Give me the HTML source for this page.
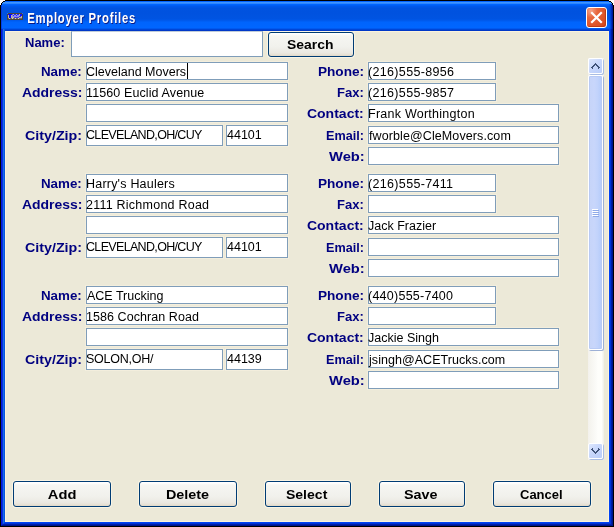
<!DOCTYPE html>
<html><head><meta charset="utf-8">
<style>
*{margin:0;padding:0}
html,body{width:614px;height:527px;overflow:hidden;background:#fff}
body{position:relative;font-family:"Liberation Sans",sans-serif}
#win{position:absolute;left:0;top:0;width:614px;height:527px;background:#000;overflow:hidden}
#title{position:absolute;left:1px;top:1px;width:612px;height:30px;
 background:linear-gradient(180deg,#0062ff 0px,#0062ff 1px,#3d95ff 1px,#3d95ff 2px,#2e86ff 2px,#2e86ff 3px,#0066ff 3px,#0066ff 4px,#005ef5 4px,#005ef5 5px,#0058ea 5px,#0058ea 6px,#0055e5 6px,#0055e5 7px,#0053e0 7px,#0052df 12px,#0054e2 18px,#005cf0 20px,#0064fc 21px,#0066ff 26px,#0066ff 27px,#005af0 27px,#005af0 28px,#0046d6 28px,#0046d6 29px,#0038c8 29px)}
#lf{position:absolute;left:1px;top:31px;width:4px;height:495px;background:linear-gradient(90deg,#0019e0 0,#0019e0 1px,#0831d9 1px,#0831d9 2px,#166aee 2px,#166aee 3px,#0855dd 3px)}
#rf{position:absolute;left:609px;top:31px;width:4px;height:495px;background:linear-gradient(90deg,#0040f8 0,#0040f8 1px,#0030d8 1px,#0030d8 2px,#001ca0 2px,#001ca0 3px,#00138c 3px)}
#bf{position:absolute;left:1px;top:522px;width:612px;height:4px;background:linear-gradient(180deg,#0044f0 0,#0044f0 1px,#0038d8 1px,#0038d8 2px,#0020a8 2px,#0020a8 3px,#00128c 3px)}
#client{position:absolute;left:5px;top:31px;width:602px;height:489px;background:#ece9d8;border:1px solid #fbf3dc}
#close{position:absolute;left:586px;top:7px;width:19px;height:19px;border:1px solid #fff;border-radius:3px;
 background:radial-gradient(ellipse at 20% 15%,#f4a48a 0,#e8683e 30%,#de5428 65%,#cf4418 100%);box-shadow:inset -1px -1px 0 #c03c14}
.t{position:absolute;line-height:16px;white-space:nowrap}
.f{position:absolute;border:1px solid #7f9db9;background:#fff;box-shadow:0 0 0 1px #f3eedd}
.b{position:absolute;border:1px solid #003c74;border-radius:3px;background:linear-gradient(180deg,#fff 0,#fff 1px,#f6f6f2 3px,#f1f1ec 60%,#ebe9e2 85%,#e6e0d3 calc(100% - 1px),#e0d6c4 100%);box-shadow:0 0 0 1px #f9f4e4}
.sbb{position:absolute;width:13px;border:1px solid #fff;border-radius:2px;box-shadow:1px 1px 0 #a9bde3}
.sbb i{position:absolute;display:block;width:1px;height:1px;background:#4d6185}
.cv{position:absolute;display:block;width:1px;height:1px;background:#3f5278}

</style></head><body>
<div id="win">
<div id="title"></div>
<div style="position:absolute;left:1px;top:29px;width:610px;height:496px;border-left:1px solid #0019e0;border-right:1px solid #00138c;border-bottom:1px solid #00138c"></div>
<div style="position:absolute;left:2px;top:29px;width:608px;height:495px;border-left:1px solid #0831d9;border-right:1px solid #0020a8;border-bottom:1px solid #0020a8"></div>
<div style="position:absolute;left:3px;top:29px;width:606px;height:494px;border-left:1px solid #166aee;border-right:1px solid #0034d8;border-bottom:1px solid #0034d8"></div>
<div style="position:absolute;left:4px;top:29px;width:604px;height:493px;border-left:1px solid #0855dd;border-right:1px solid #0042f4;border-bottom:1px solid #0042f4"></div>
<div style="position:absolute;left:609px;top:4px;width:4px;height:25px;background:linear-gradient(90deg,rgba(0,60,220,.25) 0,rgba(0,60,220,.25) 1px,rgba(0,48,200,.5) 1px,rgba(0,48,200,.5) 2px,rgba(0,32,168,.75) 2px,rgba(0,32,168,.75) 3px,#00189a 3px)"></div>
<div style="position:absolute;left:1px;top:4px;width:1px;height:25px;background:rgba(0,40,224,.6)"></div>
<svg width="16" height="7" style="position:absolute;left:7px;top:13px" shape-rendering="crispEdges">
<rect x="0" y="0" width="16" height="7" fill="#4a463c"/>
<rect x="1" y="1" width="14" height="5" fill="#b8b4a8"/>
<rect x="1" y="1" width="4" height="1" fill="#0000ff"/><rect x="2" y="1" width="2" height="4" fill="#0000ff"/>
<rect x="5" y="1" width="1" height="1" fill="#6060e0"/><rect x="7" y="1" width="2" height="1" fill="#2020ff"/><rect x="10" y="1" width="2" height="1" fill="#2020ff"/><rect x="13" y="1" width="2" height="2" fill="#1010ff"/>
<rect x="5" y="2" width="7" height="2" fill="#8c8cf0"/><rect x="6" y="2" width="1" height="1" fill="#2020ff"/><rect x="9" y="2" width="1" height="1" fill="#2020ff"/><rect x="12" y="3" width="2" height="1" fill="#2020ff"/>
<rect x="7" y="4" width="5" height="1" fill="#4040e8"/>
<rect x="1" y="5" width="14" height="1" fill="#6e6a60"/><rect x="2" y="5" width="1" height="1" fill="#d0ccc0"/><rect x="5" y="5" width="1" height="1" fill="#d0ccc0"/><rect x="8" y="5" width="1" height="1" fill="#d0ccc0"/><rect x="11" y="5" width="1" height="1" fill="#d0ccc0"/>
<rect x="0" y="0" width="1" height="1" fill="#2c6ee8"/><rect x="15" y="0" width="1" height="1" fill="#2c6ee8"/>
</svg>
<div id="close"><svg width="19" height="19" style="position:absolute;left:0;top:0"><path d="M5 5 L14 14 M14 5 L5 14" stroke="#fff" stroke-width="2.2" stroke-linecap="square"/></svg></div>

<div id="corners"><div style="position:absolute;left:0;top:0px;width:5px;height:1px;background:#fff"></div><div style="position:absolute;left:609px;top:0px;width:5px;height:1px;background:#fff"></div><div style="position:absolute;left:0;top:1px;width:3px;height:1px;background:#fff"></div><div style="position:absolute;left:611px;top:1px;width:3px;height:1px;background:#fff"></div><div style="position:absolute;left:3px;top:1px;width:2px;height:1px;background:#000"></div><div style="position:absolute;left:609px;top:1px;width:2px;height:1px;background:#000"></div><div style="position:absolute;left:0;top:2px;width:2px;height:1px;background:#fff"></div><div style="position:absolute;left:612px;top:2px;width:2px;height:1px;background:#fff"></div><div style="position:absolute;left:2px;top:2px;width:1px;height:1px;background:#000"></div><div style="position:absolute;left:611px;top:2px;width:1px;height:1px;background:#000"></div><div style="position:absolute;left:0;top:3px;width:1px;height:1px;background:#fff"></div><div style="position:absolute;left:613px;top:3px;width:1px;height:1px;background:#fff"></div><div style="position:absolute;left:1px;top:3px;width:1px;height:1px;background:#000"></div><div style="position:absolute;left:612px;top:3px;width:1px;height:1px;background:#000"></div><div style="position:absolute;left:0;top:4px;width:1px;height:1px;background:#fff"></div><div style="position:absolute;left:613px;top:4px;width:1px;height:1px;background:#fff"></div><div style="position:absolute;left:1px;top:4px;width:1px;height:1px;background:#000"></div><div style="position:absolute;left:612px;top:4px;width:1px;height:1px;background:#000"></div></div>

<div id="client"></div>
<div class="f" style="left:71px;top:31px;width:190px;height:24px;border-top-color:#c0ccd8;box-shadow:none"></div>
<div class="b" style="left:268px;top:32px;width:84px;height:23px"></div><div class="b" style="left:13px;top:481px;width:96px;height:24px"></div><div class="b" style="left:139px;top:481px;width:96px;height:24px"></div><div class="b" style="left:265px;top:481px;width:84px;height:24px"></div><div class="b" style="left:379px;top:481px;width:84px;height:24px"></div><div class="b" style="left:493px;top:481px;width:96px;height:24px"></div>
<div class="f" style="left:86px;top:62px;width:200px;height:16px"></div>
<div class="f" style="left:86px;top:83px;width:200px;height:16px"></div>
<div class="f" style="left:86px;top:104px;width:200px;height:16px"></div>
<div class="f" style="left:86px;top:125px;width:135px;height:19px"></div>
<div class="f" style="left:226px;top:125px;width:60px;height:19px"></div>
<div class="f" style="left:368px;top:62px;width:126px;height:16px"></div>
<div class="f" style="left:368px;top:83px;width:126px;height:16px"></div>
<div class="f" style="left:368px;top:104px;width:189px;height:16px"></div>
<div class="f" style="left:368px;top:126px;width:189px;height:16px"></div>
<div class="f" style="left:368px;top:147px;width:189px;height:16px"></div>
<div class="f" style="left:86px;top:174px;width:200px;height:16px"></div>
<div class="f" style="left:86px;top:195px;width:200px;height:16px"></div>
<div class="f" style="left:86px;top:216px;width:200px;height:16px"></div>
<div class="f" style="left:86px;top:237px;width:135px;height:19px"></div>
<div class="f" style="left:226px;top:237px;width:60px;height:19px"></div>
<div class="f" style="left:368px;top:174px;width:126px;height:16px"></div>
<div class="f" style="left:368px;top:195px;width:126px;height:16px"></div>
<div class="f" style="left:368px;top:216px;width:189px;height:16px"></div>
<div class="f" style="left:368px;top:238px;width:189px;height:16px"></div>
<div class="f" style="left:368px;top:259px;width:189px;height:16px"></div>
<div class="f" style="left:86px;top:286px;width:200px;height:16px"></div>
<div class="f" style="left:86px;top:307px;width:200px;height:16px"></div>
<div class="f" style="left:86px;top:328px;width:200px;height:16px"></div>
<div class="f" style="left:86px;top:349px;width:135px;height:19px"></div>
<div class="f" style="left:226px;top:349px;width:60px;height:19px"></div>
<div class="f" style="left:368px;top:286px;width:126px;height:16px"></div>
<div class="f" style="left:368px;top:307px;width:126px;height:16px"></div>
<div class="f" style="left:368px;top:328px;width:189px;height:16px"></div>
<div class="f" style="left:368px;top:350px;width:189px;height:16px"></div>
<div class="f" style="left:368px;top:371px;width:189px;height:16px"></div>
<div style="position:absolute;left:187px;top:63px;width:1px;height:16px;background:#000"></div>
<div style="position:absolute;left:588px;top:58px;width:16px;height:402px;background:linear-gradient(90deg,#f3f1ec 0,#f5f4ef 2px,#fbfbf8 8px,#fefefb 10px,#fefefb 14px,#f2f1ea 15px)"></div>
<div class="sbb" style="left:588px;top:58px;height:14px;background:linear-gradient(135deg,#dde7fd 0%,#c8d7fb 45%,#b9cdf9 100%)"></div>
<div class="sbb" style="left:588px;top:443px;height:14px;background:linear-gradient(135deg,#dde7fd 0%,#c8d7fb 45%,#b9cdf9 100%)"></div>
<div class="sbb" style="left:588px;top:75px;height:273px;background:linear-gradient(90deg,#c6d4f8 0%,#c8d6fb 40%,#c2d3fb 65%,#b3cbfa 100%);box-shadow:1px 1px 0 #9db0d6,inset 0 0 0 1px #b8caf4"></div>
<div style="position:absolute;left:592px;top:209px;width:6px;height:1px;background:#fff"></div>
<div style="position:absolute;left:593px;top:210px;width:6px;height:1px;background:#8faae8"></div>
<div style="position:absolute;left:592px;top:211px;width:6px;height:1px;background:#fff"></div>
<div style="position:absolute;left:593px;top:212px;width:6px;height:1px;background:#8faae8"></div>
<div style="position:absolute;left:592px;top:213px;width:6px;height:1px;background:#fff"></div>
<div style="position:absolute;left:593px;top:214px;width:6px;height:1px;background:#8faae8"></div>
<div style="position:absolute;left:592px;top:215px;width:6px;height:1px;background:#fff"></div>
<div style="position:absolute;left:593px;top:216px;width:6px;height:1px;background:#8faae8"></div>
<div style="position:absolute;left:0;top:0"><i class="cv" style="left:595px;top:63px"></i><i class="cv" style="left:594px;top:64px"></i><i class="cv" style="left:595px;top:64px"></i><i class="cv" style="left:596px;top:64px"></i><i class="cv" style="left:593px;top:65px"></i><i class="cv" style="left:594px;top:65px"></i><i class="cv" style="left:596px;top:65px"></i><i class="cv" style="left:597px;top:65px"></i><i class="cv" style="left:592px;top:66px"></i><i class="cv" style="left:593px;top:66px"></i><i class="cv" style="left:597px;top:66px"></i><i class="cv" style="left:598px;top:66px"></i><i class="cv" style="left:591px;top:67px"></i><i class="cv" style="left:592px;top:67px"></i><i class="cv" style="left:598px;top:67px"></i><i class="cv" style="left:599px;top:67px"></i><i class="cv" style="left:592px;top:68px"></i><i class="cv" style="left:598px;top:68px"></i><i class="cv" style="left:592px;top:448px"></i><i class="cv" style="left:598px;top:448px"></i><i class="cv" style="left:591px;top:449px"></i><i class="cv" style="left:592px;top:449px"></i><i class="cv" style="left:598px;top:449px"></i><i class="cv" style="left:599px;top:449px"></i><i class="cv" style="left:592px;top:450px"></i><i class="cv" style="left:593px;top:450px"></i><i class="cv" style="left:597px;top:450px"></i><i class="cv" style="left:598px;top:450px"></i><i class="cv" style="left:593px;top:451px"></i><i class="cv" style="left:594px;top:451px"></i><i class="cv" style="left:596px;top:451px"></i><i class="cv" style="left:597px;top:451px"></i><i class="cv" style="left:594px;top:452px"></i><i class="cv" style="left:595px;top:452px"></i><i class="cv" style="left:596px;top:452px"></i><i class="cv" style="left:595px;top:453px"></i></div>
<div id="txt" style="position:absolute;left:0;top:0;width:614px;height:527px;will-change:transform">
<div class="t" style="left:41px;top:64px;font-size:13px;font-weight:bold;transform-origin:1px 0;transform:scaleX(1.0263);color:#000080">Name:</div>
<div class="t" style="left:22px;top:85px;font-size:13px;font-weight:bold;transform-origin:1px 0;transform:scaleX(1.0741);color:#000080">Address:</div>
<div class="t" style="left:25px;top:128px;font-size:13px;font-weight:bold;transform-origin:1px 0;transform:scaleX(1.1000);color:#000080">City/Zip:</div>
<div class="t" style="left:318px;top:64px;font-size:13px;font-weight:bold;transform-origin:1px 0;transform:scaleX(1.0476);color:#000080">Phone:</div>
<div class="t" style="left:337px;top:85px;font-size:13px;font-weight:bold;transform-origin:1px 0;transform:scaleX(1.0000);color:#000080">Fax:</div>
<div class="t" style="left:307px;top:106px;font-size:13px;font-weight:bold;transform-origin:1px 0;transform:scaleX(1.0784);color:#000080">Contact:</div>
<div class="t" style="left:326px;top:128px;font-size:13px;font-weight:bold;transform-origin:1px 0;transform:scaleX(0.9730);color:#000080">Email:</div>
<div class="t" style="left:329px;top:149px;font-size:13px;font-weight:bold;transform-origin:0px 0;transform:scaleX(1.1333);color:#000080">Web:</div>
<div class="t" style="left:86px;top:64px;font-size:12.5px;letter-spacing:0.000px;color:#000">Cleveland Movers</div>
<div class="t" style="left:86px;top:85px;font-size:12.5px;letter-spacing:0.111px;color:#000">11560 Euclid Avenue</div>
<div class="t" style="left:86px;top:127px;font-size:12.5px;letter-spacing:-0.667px;color:#000">CLEVELAND,OH/CUY</div>
<div class="t" style="left:227px;top:127px;font-size:12.5px;letter-spacing:0.000px;color:#000">44101</div>
<div class="t" style="left:368px;top:64px;font-size:12.5px;letter-spacing:0.333px;color:#000">(216)555-8956</div>
<div class="t" style="left:368px;top:85px;font-size:12.5px;letter-spacing:0.333px;color:#000">(216)555-9857</div>
<div class="t" style="left:368px;top:106px;font-size:12.5px;letter-spacing:0.250px;color:#000">Frank Worthington</div>
<div class="t" style="left:369px;top:128px;font-size:12.5px;letter-spacing:0.100px;color:#000">fworble@CleMovers.com</div>
<div class="t" style="left:41px;top:176px;font-size:13px;font-weight:bold;transform-origin:1px 0;transform:scaleX(1.0263);color:#000080">Name:</div>
<div class="t" style="left:22px;top:197px;font-size:13px;font-weight:bold;transform-origin:1px 0;transform:scaleX(1.0741);color:#000080">Address:</div>
<div class="t" style="left:25px;top:240px;font-size:13px;font-weight:bold;transform-origin:1px 0;transform:scaleX(1.1000);color:#000080">City/Zip:</div>
<div class="t" style="left:318px;top:176px;font-size:13px;font-weight:bold;transform-origin:1px 0;transform:scaleX(1.0476);color:#000080">Phone:</div>
<div class="t" style="left:337px;top:197px;font-size:13px;font-weight:bold;transform-origin:1px 0;transform:scaleX(1.0000);color:#000080">Fax:</div>
<div class="t" style="left:307px;top:218px;font-size:13px;font-weight:bold;transform-origin:1px 0;transform:scaleX(1.0784);color:#000080">Contact:</div>
<div class="t" style="left:326px;top:240px;font-size:13px;font-weight:bold;transform-origin:1px 0;transform:scaleX(0.9730);color:#000080">Email:</div>
<div class="t" style="left:329px;top:261px;font-size:13px;font-weight:bold;transform-origin:0px 0;transform:scaleX(1.1333);color:#000080">Web:</div>
<div class="t" style="left:86px;top:176px;font-size:12.5px;letter-spacing:0.214px;color:#000">Harry's Haulers</div>
<div class="t" style="left:86px;top:197px;font-size:12.5px;letter-spacing:0.235px;color:#000">2111 Richmond Road</div>
<div class="t" style="left:86px;top:239px;font-size:12.5px;letter-spacing:-0.667px;color:#000">CLEVELAND,OH/CUY</div>
<div class="t" style="left:227px;top:239px;font-size:12.5px;letter-spacing:0.000px;color:#000">44101</div>
<div class="t" style="left:368px;top:176px;font-size:12.5px;letter-spacing:0.333px;color:#000">(216)555-7411</div>
<div class="t" style="left:368px;top:218px;font-size:12.5px;letter-spacing:0.000px;color:#000">Jack Frazier</div>
<div class="t" style="left:41px;top:288px;font-size:13px;font-weight:bold;transform-origin:1px 0;transform:scaleX(1.0263);color:#000080">Name:</div>
<div class="t" style="left:22px;top:309px;font-size:13px;font-weight:bold;transform-origin:1px 0;transform:scaleX(1.0741);color:#000080">Address:</div>
<div class="t" style="left:25px;top:352px;font-size:13px;font-weight:bold;transform-origin:1px 0;transform:scaleX(1.1000);color:#000080">City/Zip:</div>
<div class="t" style="left:318px;top:288px;font-size:13px;font-weight:bold;transform-origin:1px 0;transform:scaleX(1.0476);color:#000080">Phone:</div>
<div class="t" style="left:337px;top:309px;font-size:13px;font-weight:bold;transform-origin:1px 0;transform:scaleX(1.0000);color:#000080">Fax:</div>
<div class="t" style="left:307px;top:330px;font-size:13px;font-weight:bold;transform-origin:1px 0;transform:scaleX(1.0784);color:#000080">Contact:</div>
<div class="t" style="left:326px;top:352px;font-size:13px;font-weight:bold;transform-origin:1px 0;transform:scaleX(0.9730);color:#000080">Email:</div>
<div class="t" style="left:329px;top:373px;font-size:13px;font-weight:bold;transform-origin:0px 0;transform:scaleX(1.1333);color:#000080">Web:</div>
<div class="t" style="left:87px;top:288px;font-size:12.5px;letter-spacing:0.000px;color:#000">ACE Trucking</div>
<div class="t" style="left:86px;top:309px;font-size:12.5px;letter-spacing:0.062px;color:#000">1586 Cochran Road</div>
<div class="t" style="left:86px;top:351px;font-size:12.5px;letter-spacing:-0.250px;color:#000">SOLON,OH/</div>
<div class="t" style="left:227px;top:351px;font-size:12.5px;letter-spacing:0.000px;color:#000">44139</div>
<div class="t" style="left:368px;top:288px;font-size:12.5px;letter-spacing:0.250px;color:#000">(440)555-7400</div>
<div class="t" style="left:368px;top:330px;font-size:12.5px;letter-spacing:0.000px;color:#000">Jackie Singh</div>
<div class="t" style="left:369px;top:352px;font-size:12.5px;letter-spacing:0.053px;color:#000">jsingh@ACETrucks.com</div>
<div class="t" style="left:25px;top:35px;font-size:13px;font-weight:bold;transform-origin:1px 0;transform:scaleX(1.0000);color:#000080">Name:</div>
<div class="t" style="left:287px;top:37px;font-size:13px;font-weight:bold;transform-origin:1px 0;transform:scaleX(1.0714);color:#000">Search</div>
<div class="t" style="left:48px;top:487px;font-size:13px;font-weight:bold;transform-origin:1px 0;transform:scaleX(1.1304);color:#000">Add</div>
<div class="t" style="left:166px;top:487px;font-size:13px;font-weight:bold;transform-origin:1px 0;transform:scaleX(1.1053);color:#000">Delete</div>
<div class="t" style="left:286px;top:487px;font-size:13px;font-weight:bold;transform-origin:1px 0;transform:scaleX(1.0811);color:#000">Select</div>
<div class="t" style="left:404px;top:487px;font-size:13px;font-weight:bold;transform-origin:1px 0;transform:scaleX(1.1034);color:#000">Save</div>
<div class="t" style="left:520px;top:487px;font-size:13px;font-weight:bold;transform-origin:1px 0;transform:scaleX(1.0000);color:#000">Cancel</div>
<div class="t" style="left:27px;top:10px;font-size:14.5px;font-weight:bold;letter-spacing:0.949px;transform-origin:1px 0;transform:scaleX(0.78);color:#fff;text-shadow:1px 1px 0 #0a1883">Employer Profiles</div>
</div>
</div>
</body></html>
